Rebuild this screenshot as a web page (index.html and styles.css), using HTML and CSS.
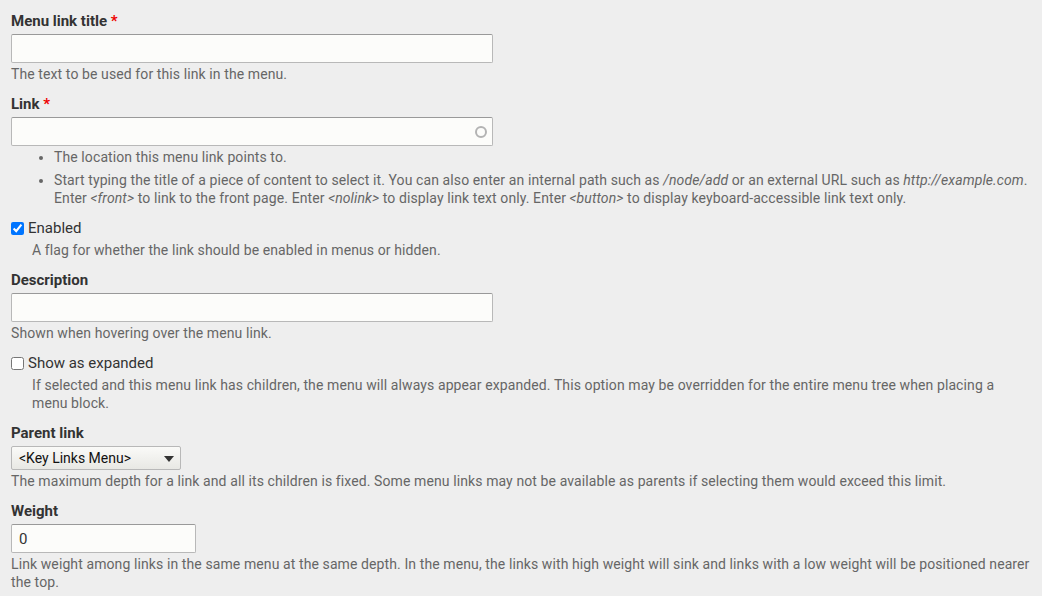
FILE: index.html
```html
<!DOCTYPE html>
<html>
<head>
<meta charset="utf-8">
<link rel="stylesheet" href="styles.css">
</head>
<body>
<form class="form">
  <div class="form-item">
    <label class="label">Menu link title <span class="req">*</span></label>
    <input class="text full" type="text">
    <div class="desc">The text to be used for this link in the menu.</div>
  </div>
  <div class="form-item">
    <label class="label">Link <span class="req">*</span></label>
    <div class="autocomplete">
      <input class="text full" type="text">
      <span class="throbber"></span>
    </div>
    <ul class="desc-list">
      <li>The location this menu link points to.</li>
      <li>Start typing the title of a piece of content to select it. You can also enter an internal path such as <em>/node/add</em> or an external URL such as <em>http://example.com</em>. Enter <em>&lt;front&gt;</em> to link to the front page. Enter <em>&lt;nolink&gt;</em> to display link text only. Enter <em>&lt;button&gt;</em> to display keyboard-accessible link text only.</li>
    </ul>
  </div>
  <div class="form-item check-item">
    <label class="check-label"><input type="checkbox" class="cb" checked> Enabled</label>
    <div class="desc indent">A flag for whether the link should be enabled in menus or hidden.</div>
  </div>
  <div class="form-item">
    <label class="label">Description</label>
    <input class="text full" type="text">
    <div class="desc">Shown when hovering over the menu link.</div>
  </div>
  <div class="form-item check-item">
    <label class="check-label"><input type="checkbox" class="cb"> Show as expanded</label>
    <div class="desc indent">If selected and this menu link has children, the menu will always appear expanded. This option may be overridden for the entire menu tree when placing a menu block.</div>
  </div>
  <div class="form-item">
    <label class="label">Parent link</label>
    <div class="select"><span>&lt;Key Links Menu&gt;</span><span class="arrow"></span></div>
    <div class="desc">The maximum depth for a link and all its children is fixed. Some menu links may not be available as parents if selecting them would exceed this limit.</div>
  </div>
  <div class="form-item">
    <label class="label">Weight</label>
    <input class="text weight" type="text" value="0">
    <div class="desc">Link weight among links in the same menu at the same depth. In the menu, the links with high weight will sink and links with a low weight will be positioned nearer the top.</div>
  </div>
</form>
</body>
</html>
```

FILE: styles.css
```css
html, body {
  margin: 0;
  padding: 0;
  background: #eeeeee;
}
body {
  font-family: Roboto, "Liberation Sans", Arial, sans-serif;
  color: #333333;
}
.form {
  padding: 12px 11px 0 11px;
  display: flex;
  flex-direction: column;
}
.form-item {
  margin-bottom: 12px;
}
.label {
  display: block;
  font-size: 15px;
  font-weight: bold;
  line-height: 18px;
  margin-bottom: 4px;
  color: #333;
}
.req {
  color: #e00;
}
.text {
  display: block;
  box-sizing: border-box;
  height: 29px;
  border: 1px solid #b8b8b8;
  border-top-color: #999;
  border-radius: 2px;
  background: #fcfcfa;
  font-family: Roboto, "Liberation Sans", Arial, sans-serif;
  font-size: 15px;
  color: #333;
  padding: 4px 7px;
  margin: 0;
}
.full {
  width: 482px;
}
.weight {
  width: 185px;
}
.desc {
  font-size: 14px;
  letter-spacing: 0.1px;
  line-height: 18px;
  color: #666666;
  margin-top: 2px;
}
.autocomplete {
  position: relative;
  width: 482px;
}
.throbber {
  position: absolute;
  right: 6px;
  top: 9px;
  width: 8px;
  height: 8px;
  border: 2px solid #b3b3b3;
  border-radius: 50%;
}
.desc-list {
  font-size: 14px;
  letter-spacing: 0.1px;
  line-height: 18px;
  color: #666666;
  margin: 2px 0 0 0;
  padding: 0 0 0 43px;
}
.desc-list li {
  margin: 0 0 5px 0;
}
.desc-list li:last-child {
  margin-bottom: 0;
}
.check-item {
  margin-top: 0;
}
.check-label {
  display: flex;
  align-items: center;
  font-size: 15px;
  line-height: 18px;
  color: #333;
}
.cb {
  width: 13px;
  height: 13px;
  margin: 0 4px 0 0;
  accent-color: #0075ff;
}
.indent {
  margin-left: 21px;
  margin-top: 4px;
}
.select {
  box-sizing: border-box;
  width: 170px;
  height: 24px;
  border: 1px solid #b8b8b8;
  border-radius: 2px;
  background: linear-gradient(#fafaf8, #e8e8e4);
  display: flex;
  align-items: center;
  justify-content: space-between;
  padding: 0 6px 0 7px;
  font-size: 14px;
  color: #111;
}
.arrow {
  width: 0;
  height: 0;
  border-left: 5px solid transparent;
  border-right: 5px solid transparent;
  border-top: 6px solid #333;
  margin-top: 2px;
}
```
